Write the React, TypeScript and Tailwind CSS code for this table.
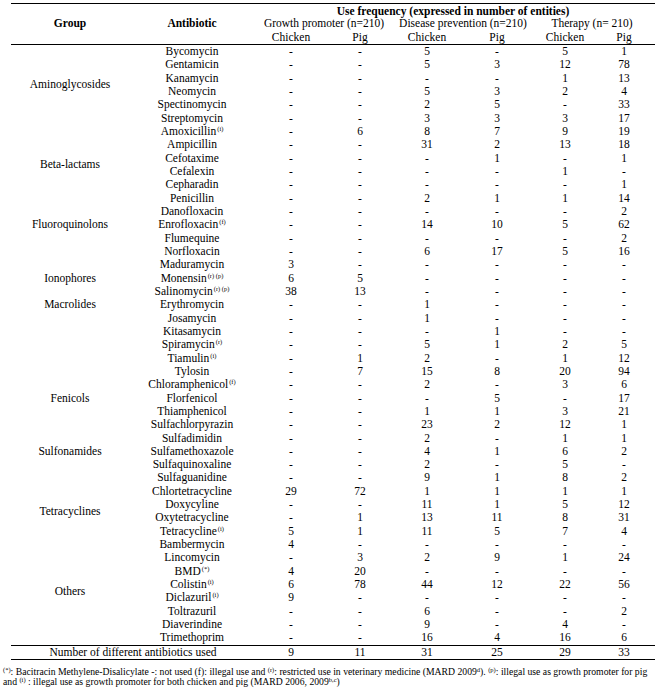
import React from "react";

type Row = [string, string, string, string, string, string, string, string];

const rows: Row[] = [
  ["Bycomycin", "", "-", "-", "5", "-", "5", "1"],
  ["Gentamicin", "", "-", "-", "5", "3", "12", "78"],
  ["Kanamycin", "", "-", "-", "-", "-", "1", "13"],
  ["Neomycin", "", "-", "-", "5", "3", "2", "4"],
  ["Spectinomycin", "", "-", "-", "2", "5", "-", "33"],
  ["Streptomycin", "", "-", "-", "3", "3", "3", "17"],
  ["Amoxicillin", "(i)", "-", "6", "8", "7", "9", "19"],
  ["Ampicillin", "", "-", "-", "31", "2", "13", "18"],
  ["Cefotaxime", "", "-", "-", "-", "1", "-", "1"],
  ["Cefalexin", "", "-", "-", "-", "-", "1", "-"],
  ["Cepharadin", "", "-", "-", "-", "-", "-", "1"],
  ["Penicillin", "", "-", "-", "2", "1", "1", "14"],
  ["Danofloxacin", "", "-", "-", "-", "-", "-", "2"],
  ["Enrofloxacin", "(f)", "-", "-", "14", "10", "5", "62"],
  ["Flumequine", "", "-", "-", "-", "-", "-", "2"],
  ["Norfloxacin", "", "-", "-", "6", "17", "5", "16"],
  ["Maduramycin", "", "3", "-", "-", "-", "-", "-"],
  ["Monensin", "(r) (p)", "6", "5", "-", "-", "-", "-"],
  ["Salinomycin", "(r) (p)", "38", "13", "-", "-", "-", "-"],
  ["Erythromycin", "", "-", "-", "1", "-", "-", "-"],
  ["Josamycin", "", "-", "-", "1", "-", "-", "-"],
  ["Kitasamycin", "", "-", "-", "-", "1", "-", "-"],
  ["Spiramycin", "(r)", "-", "-", "5", "1", "2", "5"],
  ["Tiamulin", "(i)", "-", "1", "2", "-", "1", "12"],
  ["Tylosin", "", "-", "7", "15", "8", "20", "94"],
  ["Chloramphenicol", "(f)", "-", "-", "2", "-", "3", "6"],
  ["Florfenicol", "", "-", "-", "-", "5", "-", "17"],
  ["Thiamphenicol", "", "-", "-", "1", "1", "3", "21"],
  ["Sulfachlorpyrazin", "", "-", "-", "23", "2", "12", "1"],
  ["Sulfadimidin", "", "-", "-", "2", "-", "1", "1"],
  ["Sulfamethoxazole", "", "-", "-", "4", "1", "6", "2"],
  ["Sulfaquinoxaline", "", "-", "-", "2", "-", "5", "-"],
  ["Sulfaguanidine", "", "-", "-", "9", "1", "8", "2"],
  ["Chlortetracycline", "", "29", "72", "1", "1", "1", "1"],
  ["Doxycyline", "", "-", "-", "11", "1", "5", "12"],
  ["Oxytetracycline", "", "-", "1", "13", "11", "8", "31"],
  ["Tetracycline", "(i)", "5", "1", "11", "5", "7", "4"],
  ["Bambermycin", "", "4", "-", "-", "-", "-", "-"],
  ["Lincomycin", "", "-", "3", "2", "9", "1", "24"],
  ["BMD", "(*)", "4", "20", "-", "-", "-", "-"],
  ["Colistin", "(i)", "6", "78", "44", "12", "22", "56"],
  ["Diclazuril", "(i)", "9", "-", "-", "-", "-", "-"],
  ["Toltrazuril", "", "-", "-", "6", "-", "-", "2"],
  ["Diaverindine", "", "-", "-", "9", "-", "4", "-"],
  ["Trimethoprim", "", "-", "-", "16", "4", "16", "6"],
];

const groupBlocks: { label: string; span: number }[] = [
  { label: "Aminoglycosides", span: 6 },
  { label: "Beta-lactams", span: 6 },
  { label: "Fluoroquinolons", span: 3 },
  { label: "", span: 1 },
  { label: "Ionophores", span: 3 },
  { label: "Macrolides", span: 1 },
  { label: "", span: 5 },
  { label: "Fenicols", span: 3 },
  { label: "Sulfonamides", span: 5 },
  { label: "Tetracyclines", span: 4 },
  { label: "Others", span: 8 },
];

const ROW = 13.333;

const cols = "grid grid-cols-[118px_126px_72px_66px_68px_72px_64px_54px]";

function Sup({ children }: { children: React.ReactNode }) {
  return (
    <span className="relative -top-[4px] text-[6.5px] leading-none ml-[1px]">
      {children}
    </span>
  );
}

function FSup({ children }: { children: React.ReactNode }) {
  return (
    <span className="relative -top-[3px] text-[6.5px] leading-none">
      {children}
    </span>
  );
}

export default function App() {
  return (
    <div className="w-[665px] h-[690px] bg-white text-black font-['Liberation_Serif',serif] text-[11.5px] leading-[13.333px] pt-[3px] overflow-hidden">
      <div className="ml-[11px] w-[644px]">
        {/* Header */}
        <div className="border-t border-b border-black">
          <div className={`${cols} grid-rows-[repeat(3,13.333px)]`}>
            <div className="col-start-1 row-start-1 row-span-3 flex items-center justify-center font-bold">
              Group
            </div>
            <div className="col-start-2 row-start-1 row-span-3 flex items-center justify-center font-bold">
              Antibiotic
            </div>
            <div className="col-start-3 col-span-6 row-start-1 pt-[1px] text-center font-bold whitespace-nowrap">
              Use frequency (expressed in number of entities)
            </div>
            <div className="col-start-3 col-span-2 row-start-2 text-center whitespace-nowrap">
              Growth promoter (n=210)
            </div>
            <div className="col-start-5 col-span-2 row-start-2 text-center whitespace-nowrap">
              Disease prevention (n=210)
            </div>
            <div className="col-start-7 col-span-2 row-start-2 text-center whitespace-nowrap">
              Therapy (n= 210)
            </div>
            <div className="col-start-3 row-start-3 text-center">Chicken</div>
            <div className="col-start-4 row-start-3 text-center">Pig</div>
            <div className="col-start-5 row-start-3 text-center">Chicken</div>
            <div className="col-start-6 row-start-3 text-center">Pig</div>
            <div className="col-start-7 row-start-3 text-center">Chicken</div>
            <div className="col-start-8 row-start-3 text-center">Pig</div>
          </div>
        </div>

        {/* Body */}
        <div className="flex">
          <div className="flex flex-col w-[118px] shrink-0">
            {groupBlocks.map((g, i) => (
              <div
                key={i}
                className="flex items-center justify-center whitespace-nowrap"
                style={{ height: `${g.span * ROW}px` }}
              >
                {g.label}
              </div>
            ))}
          </div>
          <div className="flex flex-col">
            {rows.map((r, i) => (
              <div
                key={i}
                className="grid grid-cols-[126px_72px_66px_68px_72px_64px_54px] h-[13.333px]"
              >
                <div className="text-center whitespace-nowrap">
                  {r[0]}
                  {r[1] ? <Sup>{r[1]}</Sup> : null}
                </div>
                {r.slice(2).map((v, j) => (
                  <div key={j} className="text-center">
                    {v}
                  </div>
                ))}
              </div>
            ))}
          </div>
        </div>

        {/* Totals */}
        <div className="border-t border-b border-black">
          <div className={`${cols} h-[13.333px]`}>
            <div className="col-span-2 text-center whitespace-nowrap">
              Number of different antibiotics used
            </div>
            <div className="text-center">9</div>
            <div className="text-center">11</div>
            <div className="text-center">31</div>
            <div className="text-center">25</div>
            <div className="text-center">29</div>
            <div className="text-center">33</div>
          </div>
        </div>
      </div>

      {/* Footnote */}
      <div className="ml-[3px] mt-[7px] text-[9.7px] leading-[10px] whitespace-nowrap">
        <div>
          <FSup>(*)</FSup>: Bacitracin Methylene-Disalicylate -: not used (f): illegal
          use and <FSup>(r)</FSup>: restricted use in veterinary medicine (MARD 2009
          <FSup>d</FSup>). <FSup>(p)</FSup>: illegal use as growth promoter for pig
        </div>
        <div>
          and <FSup>(i)</FSup> : illegal use as growth promoter for both chicken and pig
          (MARD 2006, 2009<FSup>b,c</FSup>)
        </div>
      </div>
    </div>
  );
}
